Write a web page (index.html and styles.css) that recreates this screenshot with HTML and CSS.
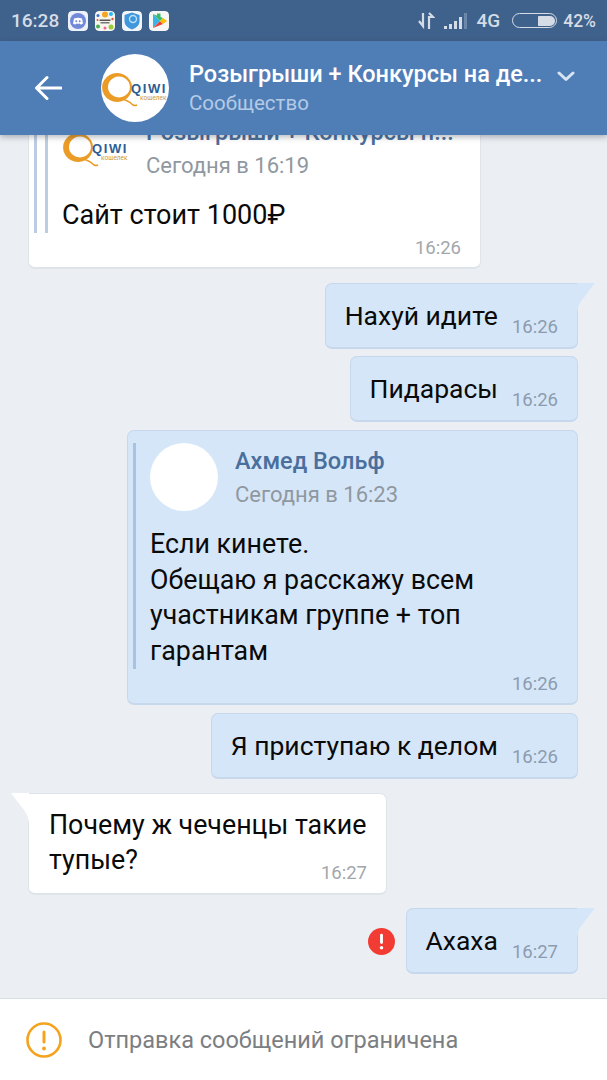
FILE: index.html
```html
<!DOCTYPE html>
<html>
<head>
	<meta charset="utf-8">
	<title>Сообщество</title>
	<link rel="stylesheet" href="styles.css">
</head>
<body>
<div class="statusbar">
	<span class="clock">16:28</span>
	<svg class="appicon" viewBox="0 0 20 20"><rect width="20" height="20" rx="4" fill="#eef0fa"/><circle cx="10" cy="10" r="8" fill="#7289da"/><path d="M6 7.500q4-1.600 8 0l1 5q-1 1-2.500 1l-.7-1q-1.800.5-3.600 0l-.7 1q-1.500 0-2.500-1z" fill="#fff"/><circle cx="8.300" cy="10.300" r="1" fill="#7289da"/><circle cx="11.700" cy="10.300" r="1" fill="#7289da"/></svg>
	<svg class="appicon" viewBox="0 0 20 20"><rect width="20" height="20" rx="4" fill="#f7f6ee"/><circle cx="10" cy="3.500" r="3" fill="#f5a623"/><circle cx="3" cy="4.500" r="1.500" fill="#3b6fd4"/><circle cx="16" cy="3" r="2" fill="#29b6f6"/><circle cx="17.500" cy="8" r="1.200" fill="#e8503a"/><circle cx="3" cy="15.500" r="2" fill="#4caf50"/><circle cx="16" cy="16" r="2.500" fill="#9ccc3c"/><circle cx="10" cy="17" r="1.500" fill="#f06292"/><circle cx="2.500" cy="9" r="1" fill="#e8503a"/><rect x="4.500" y="8.500" width="11" height="1.500" fill="#555"/><rect x="5.500" y="11" width="9" height="1.500" fill="#777"/></svg>
	<svg class="appicon" viewBox="0 0 20 20"><rect width="20" height="20" rx="4" fill="#f2f6fb"/><path d="M10 1.500l7.500 2.500v6.500q0 5-7.500 8-7.500-3-7.500-8v-6.500z" fill="#3f97dc"/><circle cx="11" cy="8" r="3.500" fill="none" stroke="#bfe0f7" stroke-width="1.400"/></svg>
	<svg class="appicon" viewBox="0 0 20 20"><rect width="20" height="20" rx="4" fill="#f6f6f6"/><path d="M4 3v14l7-7z" fill="#35b6e8"/><path d="M4 3l7 7 3-3z" fill="#3cba6a"/><path d="M4 17l7-7 3 3z" fill="#ea4335"/><path d="M14 7l4 3-4 3-3-3z" fill="#fbbc05"/><path d="M8 2.500h3.500v3.500h-3.500z" fill="#3cba6a"/></svg>
	<span class="spacer"></span>
	<svg class="netarrows" width="18" height="18" viewBox="0 0 18 18"><path d="M6 1v11M2 9l4 5V9M12 17V5h4l-4-4" fill="none" stroke="#d5dce6" stroke-width="2.200"/></svg>
	<svg class="signal" width="25" height="18" viewBox="0 0 25 18"><g fill="#d5dce6"><rect x="0" y="14" width="3" height="3"/><rect x="5" y="12" width="3" height="5"/><rect x="10" y="9" width="3" height="8"/><rect x="15" y="5" width="3" height="12"/></g><rect x="20" y="1" width="3" height="16" fill="#6b87a9"/></svg>
	<span class="netlabel">4G</span>
	<span class="battery"><span class="batteryfill"></span></span>
	<span class="percent">42%</span>
</div>

<div class="header">
	<svg class="back" width="28" height="26" viewBox="0 0 28 26"><path d="M27 13H3M13 2.500L2.500 13 13 23.500" fill="none" stroke="#fff" stroke-width="3" stroke-linecap="round" stroke-linejoin="round"/></svg>
	<div class="avatar logo">
		<svg class="qring" width="36" height="34" viewBox="0 0 36 34"><path fill-rule="evenodd" d="M15 0a15 14.500 0 1 0 .1 0zM17 3.500a11 10.500 0 1 1-.1 0z" fill="#ea9c26"/><path d="M17 26q8 0 14 6q2 1 4 0" fill="none" stroke="#ea9c26" stroke-width="1.600"/></svg>
		<span class="qiwi"><b>QIWI</b><i>кошелек</i></span>
	</div>
	<div class="titles">
		<div class="title">Розыгрыши + Конкурсы на де...</div>
		<div class="subtitle">Сообщество</div>
	</div>
	<svg class="chevron" width="18" height="11" viewBox="0 0 18 11"><path d="M2 2l7 6.500L16 2" fill="none" stroke="#d9e4f2" stroke-width="3" stroke-linecap="round" stroke-linejoin="round"/></svg>
</div>

<div class="chat">
	<div class="row in">
		<div class="bubble quoted">
			<div class="reply outer">
				<div class="reply inner">
					<div class="replyhead">
						<div class="avatar logo">
							<svg class="qring" width="36" height="34" viewBox="0 0 36 34"><path fill-rule="evenodd" d="M15 0a15 14.500 0 1 0 .1 0zM17 3.500a11 10.500 0 1 1-.1 0z" fill="#ea9c26"/><path d="M17 26q8 0 14 6q2 1 4 0" fill="none" stroke="#ea9c26" stroke-width="1.600"/></svg>
							<span class="qiwi"><b>QIWI</b><i>кошелек</i></span>
						</div>
						<div>
							<div class="author">Розыгрыши + Конкурсы н...</div>
							<div class="when">Сегодня в 16:19</div>
						</div>
					</div>
					<div class="body">Сайт стоит 1000₽</div>
				</div>
			</div>
			<div class="time end">16:26</div>
		</div>
	</div>

	<div class="row out first">
		<div class="bubble tail"><span class="text">Нахуй идите</span><span class="time">16:26</span></div>
	</div>
	<div class="row out near">
		<div class="bubble"><span class="text">Пидарасы</span><span class="time">16:26</span></div>
	</div>
	<div class="row out">
		<div class="bubble quoted">
			<div class="reply">
				<div class="replyhead">
					<div class="avatar"></div>
					<div>
						<div class="author">Ахмед Вольф</div>
						<div class="when">Сегодня в 16:23</div>
					</div>
				</div>
				<div class="body">Если кинете.<br>Обещаю я расскажу всем<br>участникам группе + топ<br>гарантам</div>
			</div>
			<div class="time end">16:26</div>
		</div>
	</div>
	<div class="row out">
		<div class="bubble"><span class="text">Я приступаю к делом</span><span class="time">16:26</span></div>
	</div>

	<div class="row in first">
		<div class="bubble tail stacked">
			<div class="text">Почему ж чеченцы такие<br>тупые?</div>
			<div class="time end">16:27</div>
		</div>
	</div>

	<div class="row out last">
		<svg class="failed" width="27" height="27" viewBox="0 0 28 28"><circle cx="14" cy="14" r="14" fill="#f23c33"/><rect x="12.500" y="6" width="3" height="10.500" rx="1.500" fill="#fff"/><circle cx="14" cy="20.500" r="1.800" fill="#fff"/></svg>
		<div class="bubble tail"><span class="text">Ахаха</span><span class="time">16:27</span></div>
	</div>
</div>

<div class="footer">
	<svg width="36" height="36" viewBox="0 0 36 36"><circle cx="18" cy="18" r="16.500" fill="none" stroke="#f5a21c" stroke-width="2.600"/><rect x="16.500" y="8.500" width="3" height="13" rx="1.500" fill="#f5a21c"/><circle cx="18" cy="26.500" r="1.900" fill="#f5a21c"/></svg>
	<span class="notice">Отправка сообщений ограничена</span>
</div>
</body>
</html>
```

FILE: styles.css
```css
html, body {
	margin: 0;
	height: 100%;
}
body {
	width: 607px;
	height: 1080px;
	display: flex;
	flex-direction: column;
	overflow: hidden;
	font-family: Roboto, "Noto Sans", sans-serif;
	background-color: #ebeff4;
}

.statusbar {
	height: 41px;
	flex: none;
	display: flex;
	align-items: center;
	padding: 0 11px;
	box-sizing: border-box;
	background-color: #3f628c;
	color: #d5dce6;
	font-size: 19px;
	font-weight: 500;
}
.clock { margin-right: 9px; }
.appicon {
	width: 20px;
	height: 20px;
	margin-right: 7px;
	border-radius: 4px;
}
.spacer { flex: 1; }
.netarrows { margin-right: 9px; }
.signal { margin-right: 7px; }
.netlabel { margin-right: 12px; }
.battery {
	width: 45px;
	height: 15px;
	box-sizing: border-box;
	border: 1.500px solid #d5dce6;
	border-radius: 8px;
	padding: 1.500px;
	display: flex;
	justify-content: flex-end;
	margin-right: 6px;
}
.batteryfill {
	width: 17px;
	background-color: #d5dce6;
	border-radius: 1px 6px 6px 1px;
}
.percent { font-size: 17.500px; }

.header {
	height: 94px;
	flex: none;
	display: flex;
	align-items: center;
	padding: 0 32px 0 34px;
	box-sizing: border-box;
	background-color: #4f7eb7;
	box-shadow: 0 2px 6px rgba(40, 50, 60, 0.35);
	position: relative;
	z-index: 2;
}
.back {
	flex: none;
	margin-right: 39px;
}
.titles {
	flex: 1;
	margin-left: 20px;
	min-width: 0;
}
.title {
	color: #fff;
	font-size: 23.500px;
	font-weight: 500;
	line-height: 28px;
	white-space: nowrap;
}
.subtitle {
	color: #b4cae5;
	font-size: 20.500px;
	line-height: 28px;
	margin-top: 1px;
}
.chevron { flex: none; margin-top: -24px; }

.avatar {
	width: 68px;
	height: 68px;
	flex: none;
	border-radius: 50%;
	background-color: #fff;
	position: relative;
}
.logo .qring {
	position: absolute;
	left: 1px;
	top: 19px;
}
.qiwi {
	position: absolute;
	left: 30px;
	top: 28px;
	color: #2d5d94;
	line-height: 1;
}
.qiwi b {
	display: block;
	font-family: "Liberation Sans", sans-serif;
	font-size: 13px;
	letter-spacing: 1.600px;
}
.qiwi i {
	display: block;
	margin-left: 9px;
	font-size: 6.500px;
	font-style: normal;
	color: #c9993f;
}

.chat {
	flex: 1;
	min-height: 0;
	overflow: hidden;
	display: flex;
	flex-direction: column;
	justify-content: flex-end;
	padding: 0 29px 24px 28px;
}
.row {
	flex: none;
	display: flex;
	align-items: center;
	margin-top: 8px;
}
.row.first { margin-top: 14px; }
.row.last { margin-top: 13px; }
.row.near { margin-top: 7px; }
.row.out { justify-content: flex-end; }
.row.in { justify-content: flex-start; }

.bubble {
	position: relative;
	display: flex;
	align-items: flex-end;
	height: 66px;
	box-sizing: border-box;
	padding: 0 19px 9px;
	border-radius: 7px;
	background-color: #d6e6f9;
	border: 1px solid #c8d8ec;
	border-bottom-width: 2px;
	font-size: 26.500px;
	color: #0a0a0a;
}
.in .bubble {
	background-color: #fff;
	border-color: #dfe4ea;
}
.text {
	line-height: 35px;
	position: relative;
	top: -5px;
}
.time {
	margin-left: 14px;
	font-size: 18.500px;
	line-height: 22px;
	color: #8b9cae;
}
.in .time { color: #a3a7ab; }
.time.end {
	margin-left: 0;
	text-align: right;
}

.tail.bubble { border-top-right-radius: 0; }
.in .tail.bubble {
	border-top-right-radius: 7px;
	border-top-left-radius: 0;
}
.tail::after {
	content: "";
	position: absolute;
	top: -1px;
	left: 100%;
	width: 18px;
	height: 30px;
	background-color: #d6e6f9;
	clip-path: path("M0 0H18L5 17Q1 22 0 30Z");
}
.in .tail::after {
	left: auto;
	right: 100%;
	background-color: #fff;
	clip-path: path("M18 0H0L13 17Q17 22 18 30Z");
}

.stacked {
	display: block;
	height: 102px;
	width: 359px;
	padding: 14px 19px 0 20px;
	font-size: 26.800px;
}
.stacked .text { top: 0; display: block; }
.stacked .time { margin-top: -16px; }

.quoted {
	display: block;
	height: auto;
	width: 451px;
	padding: 7px 19px 8px 5px;
	font-size: 26.800px;
}
.in .quoted {
	width: 453px;
	font-size: 27px;
}
.reply {
	border-left: 3px solid #a8c2e2;
	padding-left: 14px;
}
.reply.outer {
	padding-left: 8px;
	border-left-color: #bccde3;
}
.reply.inner { border-left-color: #bccde3; }
.replyhead {
	display: flex;
	gap: 17px;
	margin-top: 5px;
}
.in .replyhead { gap: 16px; }
.author {
	margin-top: 3px;
	color: #4a6f9c;
	font-size: 23.500px;
	font-weight: 500;
	line-height: 30px;
	white-space: nowrap;
}
.when {
	margin-top: 4px;
	color: #90989f;
	font-size: 22px;
	line-height: 30px;
}
.body {
	margin-top: 16px;
	margin-bottom: -2px;
	line-height: 35.500px;
}
.reply + .time.end { margin-top: 6px; }

.failed {
	flex: none;
	margin-right: 11px;
}

.footer {
	height: 82px;
	flex: none;
	display: flex;
	align-items: center;
	box-sizing: border-box;
	padding: 0 0 0 26px;
	background-color: #fff;
	border-top: 1px solid #d8dde3;
}
.notice {
	margin-left: 26px;
	color: #7b7e82;
	font-size: 23.500px;
}
```
